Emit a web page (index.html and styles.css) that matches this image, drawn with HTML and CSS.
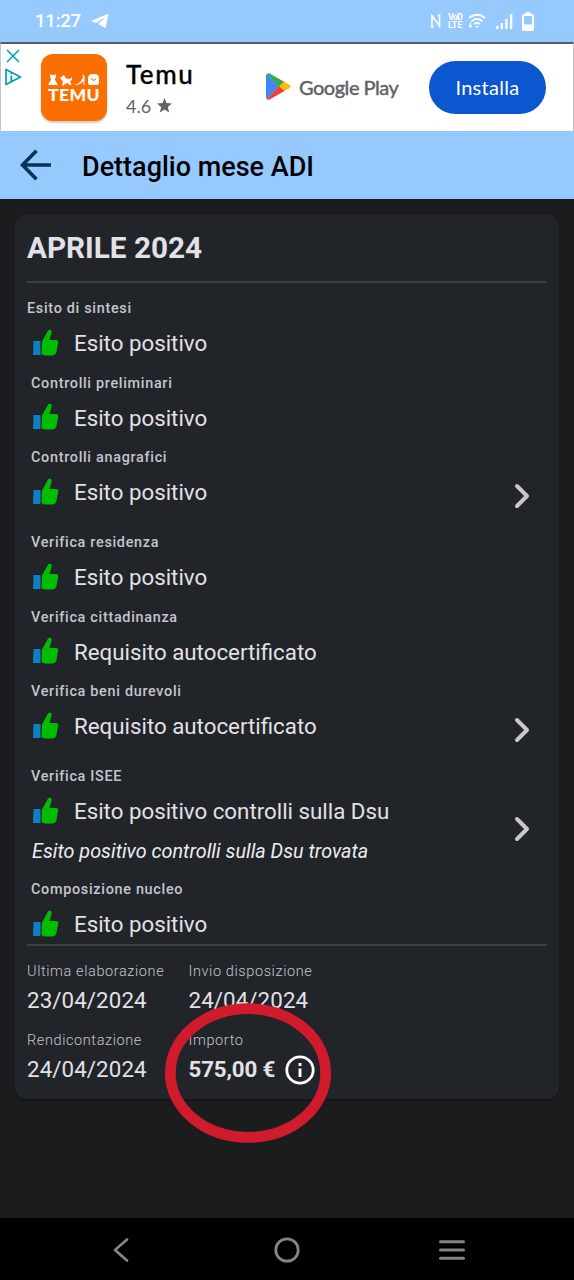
FILE: index.html
```html
<!DOCTYPE html>
<html lang="it">
<head>
<meta charset="utf-8">
<title>Dettaglio mese ADI</title>
<link rel="stylesheet" href="styles.css">
</head>
<body>
<svg class="defs" width="0" height="0" aria-hidden="true">
  <symbol id="thumb" viewBox="0 0 26 27">
    <path fill="#0f7fc4" d="M.5 12h7v14H0z"/>
    <path fill="#00bd00" d="M9 12.500 14.200 3C15 .9 16.200.3 17.400.8c1.300.6 1.600 2 1.100 3.500L16.400 11H23c1.700 0 2.500 1 2.200 2.600l-1.700 9.200c-.5 2.300-1.800 3.500-4 3.600h-7.300c-1.600-.1-2.600-.6-3.700-1.600z"/>
  </symbol>
  <symbol id="chevron" viewBox="0 0 18 28">
    <path d="M4 4 14 14 4 24" fill="none" stroke="#cbc6d0" stroke-width="4" stroke-linecap="round" stroke-linejoin="round"/>
  </symbol>
</svg>
<div class="screen">
  <header class="status">
    <span class="clock">11:27</span>
    <svg class="telegram" width="18" height="16" viewBox="0 0 18 16"><path fill="#fff" d="M17.600.5 0 7.900l5.200 2.100L15 3.400 7.300 11l7.200 4.300z"/></svg>
    <div class="indicators">
      <svg width="10" height="14" viewBox="0 0 10 14" fill="none" stroke="#fff" stroke-width="1.600"><path d="M3 12.500 1 13V1.500L8.500 12V1L6.500 1.500"/></svg>
      <span class="volte"><span class="vo">VoD</span><span>LTE</span></span>
      <svg width="18" height="16" viewBox="0 0 18 16" fill="none" stroke="#fff" stroke-width="1.900"><path d="M1 5Q9-1.500 17 5M3.500 8.300Q9 3.800 14.500 8.300M6.300 11.200Q9 9 11.700 11.200"/><path d="m7.200 13 1.800 2.200 1.800-2.200z" fill="#fff" stroke="none"/><path d="M2.500 9v5M1 12.500l1.500 1.700L4 12.500" stroke-width="1.200"/></svg>
      <svg class="signal" width="17" height="15" viewBox="0 0 17 15" fill="#fff"><path d="M0 12h2.500v3H0zM4.700 9h2.300v6H4.700zM9.300 5h2.300v10H9.300zM14 0h2.300v15H14z"/></svg>
      <svg class="battery" width="12" height="19" viewBox="0 0 12 19"><path fill="#fff" fill-rule="evenodd" d="M3.500 0h5v2H10q2 0 2 2v13q0 2-2 2H2q-2 0-2-2V4q0-2 2-2h1.500zM2 4v8.500h8V4z"/></svg>
    </div>
  </header>

  <section class="ad">
    <div class="ad-marks">
      <svg width="14" height="14" viewBox="0 0 14 14"><path d="m1 1 12 12M13 1 1 13" stroke="#00a0b4" stroke-width="1.500"/></svg>
      <svg width="17" height="18" viewBox="0 0 17 18"><path d="M1 1.500v15L15.500 9z" fill="none" stroke="#00a0b4" stroke-width="1.700" stroke-linejoin="round"/><path d="M6.300 7.500v6M6.300 4.500v1.800" stroke="#00a0b4" stroke-width="1.800"/></svg>
    </div>
    <div class="temu-logo">
      <svg width="52" height="12" viewBox="0 0 52 12" fill="#fff"><path d="M2.500 0 4 1h2L7.500 0l.5 3-1.200 2.500L10 11H0l3.200-5.500L2 3z"/><path d="m12 4 4-3 2 3.500 4 .5 2-2v3l-2 1 1.500 4h-2.500l-1-2-3.500 1-.5 1.500h-2L15 7l-1.500-1z"/><path d="M26 10.500c4 0 7-2.500 9-7L34.500.5l2 1.500v9h-1V6.500c-2 3-4.500 4.500-8.500 4.500z"/><path d="M41 1.500 43 0h5l2 1.500 1 2V9q0 2-2 2h-7q-2 0-2-2V3.500z"/><path d="M43 4.500q2.500 3.500 5 0" stroke="#fb6f00" stroke-width="1.200" fill="none"/></svg>
      <span>TEMU</span>
    </div>
    <div class="ad-app">
      <div class="ad-name">Temu</div>
      <div class="ad-rating"><span>4.6</span><svg width="15" height="15" viewBox="0 0 15 15"><path fill="#5f6368" d="m7.500 0 2 5.100 5.500.4-4.200 3.500 1.400 5.500-4.700-3-4.700 3L4.200 9 0 5.500l5.500-.4z"/></svg></div>
    </div>
    <div class="play">
      <svg width="25" height="27" viewBox="0 0 25 27"><path fill="#4285f4" d="M.7 1 13 13.500.7 26Q0 25.300 0 24V3Q0 1.700.7 1z"/><path fill="#34a853" d="M.7 1Q2-.4 4 .8L18.500 9 13 13.700z"/><path fill="#fbbc04" d="m18 8.700 5.300 3q2.500 1.700 0 3.500L18 18.300l-5.200-4.800z"/><path fill="#ea4335" d="m13 13.300 5.500 4.800L4 26.200q-2 1.200-3.300-.2z"/></svg>
      <span>Google Play</span>
    </div>
    <div class="install">Installa</div>
  </section>

  <nav class="appbar">
    <svg width="32" height="32" viewBox="0 0 32 32"><path d="M31 16H3M16.500 1.800 2.500 16l14 14.200" fill="none" stroke="#063653" stroke-width="3.700"/></svg>
    <h1>Dettaglio mese ADI</h1>
  </nav>

  <main class="content">
    <article class="card">
      <h2>APRILE 2024</h2>
      <ul class="checks">
        <li class="check first"><div class="label">Esito di sintesi</div><div class="value"><svg><use href="#thumb"/></svg><span>Esito positivo</span></div></li>
        <li class="check"><div class="label">Controlli preliminari</div><div class="value"><svg><use href="#thumb"/></svg><span>Esito positivo</span></div></li>
        <li class="check more"><div class="label">Controlli anagrafici</div><div class="value"><svg><use href="#thumb"/></svg><span>Esito positivo</span></div><svg class="go"><use href="#chevron"/></svg></li>
        <li class="check"><div class="label">Verifica residenza</div><div class="value"><svg><use href="#thumb"/></svg><span>Esito positivo</span></div></li>
        <li class="check"><div class="label">Verifica cittadinanza</div><div class="value"><svg><use href="#thumb"/></svg><span>Requisito autocertificato</span></div></li>
        <li class="check more"><div class="label">Verifica beni durevoli</div><div class="value"><svg><use href="#thumb"/></svg><span>Requisito autocertificato</span></div><svg class="go"><use href="#chevron"/></svg></li>
        <li class="check noted"><div class="label">Verifica ISEE</div><div class="value"><svg><use href="#thumb"/></svg><span>Esito positivo controlli sulla Dsu</span></div><div class="note">Esito positivo controlli sulla Dsu trovata</div><svg class="go"><use href="#chevron"/></svg></li>
        <li class="check last"><div class="label">Composizione nucleo</div><div class="value"><svg><use href="#thumb"/></svg><span>Esito positivo</span></div></li>
      </ul>
      <dl class="summary">
        <div><dt>Ultima elaborazione</dt><dd>23/04/2024</dd></div>
        <div><dt>Invio disposizione</dt><dd>24/04/2024</dd></div>
        <div><dt>Rendicontazione</dt><dd>24/04/2024</dd></div>
        <div class="amount"><dt>Importo</dt><dd><b>575,00 €</b><svg width="30" height="30" viewBox="0 0 30 30"><circle cx="15" cy="15" r="13.200" fill="none" stroke="#fff" stroke-width="2.800"/><path d="M15 13.500v8.500M15 8v3" stroke="#fff" stroke-width="2.900"/></svg></dd>
          <svg class="marker" width="168" height="140" viewBox="0 0 168 140"><ellipse cx="84" cy="70" rx="77.700" ry="64.300" fill="none" stroke="#cf1b2b" stroke-width="10.800"/></svg>
        </div>
      </dl>
    </article>
  </main>

  <footer class="navbar">
    <svg width="18" height="26" viewBox="0 0 18 26"><path d="M15 2.500 3 13l12 10.500" fill="none" stroke="#858585" stroke-width="2.700" stroke-linecap="round" stroke-linejoin="round"/></svg>
    <svg class="home" width="26" height="26" viewBox="0 0 26 26"><circle cx="13" cy="13" r="11.200" fill="none" stroke="#858585" stroke-width="2.800"/></svg>
    <svg width="26" height="20" viewBox="0 0 26 20"><path d="M1.500 1.700h23M1.500 10h23M1.500 18.300h23" stroke="#858585" stroke-width="3" stroke-linecap="round"/></svg>
  </footer>
</div>
</body>
</html>
```
FILE: styles.css
```css
* { box-sizing: border-box; }
body { margin: 0; font-family: Roboto, sans-serif; background: #1b1c1e; }
h1, h2, ul, dl, dd { margin: 0; padding: 0; }
svg { display: block; flex: none; }
.defs { position: absolute; }
.screen { width: 574px; height: 1280px; display: flex; flex-direction: column; white-space: nowrap; overflow: hidden; }

.status { height: 42px; background: #96caff; display: flex; align-items: center; padding: 0 40px 0 35px; color: #fff; }
.clock { font-size: 18.500px; font-weight: 500; letter-spacing: -.2px; }
.telegram { margin-left: 10px; }
.indicators { margin-left: auto; display: flex; align-items: center; }
.volte { display: flex; flex-direction: column; font-size: 9px; line-height: 8px; font-weight: 700; margin: 0 5px 0 7px; width: 15px; }
.vo { letter-spacing: -.9px; }
.signal { margin-left: 10px; }
.battery { margin-left: 9px; }

.ad { height: 89px; background: #fff; border-top: 2px solid #555f69; border-left: 1px solid #bfc7cf; border-right: 1px solid #c5c9ce; display: flex; align-items: center; padding-right: 27px; }
.ad-marks { width: 40px; padding-left: 5px; align-self: flex-start; padding-top: 5px; display: flex; flex-direction: column; gap: 5px; }
.ad-marks svg + svg { margin-left: -1px; }
.temu-logo { width: 66px; height: 67px; border-radius: 12px; background: #fb6f00; box-shadow: 0 2px 2px #0003; display: flex; flex-direction: column; align-items: center; padding-top: 20px; }
.temu-logo span { font: 900 17.500px/18px Lato, sans-serif; color: #fff; letter-spacing: .4px; }
.ad-app { margin-left: 19px; width: 140px; }
.ad-name { font: 500 26px/30px Lato, sans-serif; color: #000; letter-spacing: 1.600px; -webkit-text-stroke: .3px #000; }
.ad-rating { margin-top: 6px; display: flex; align-items: center; gap: 6px; font: 18px/22px Lato, sans-serif; color: #5f6368; }
.play { display: flex; align-items: center; gap: 8px; margin-top: -2px; font: 500 20px/26px Lato, sans-serif; letter-spacing: -.5px; color: #5f6368; -webkit-text-stroke: .3px #5f6368; }
.install { margin-left: auto; width: 117px; height: 53px; border-radius: 27px; background: #0b57d0; color: #fff; font: 20px/52px Lato, sans-serif; letter-spacing: .3px; text-align: center; }

.appbar { height: 68px; background: #96caff; display: flex; align-items: center; padding-left: 20px; gap: 30px; }
.appbar h1 { font-size: 27px; font-weight: 500; line-height: 34px; color: #000; padding-top: 4px; }

.content { flex: 1; padding: 15px 15px 0; }
.card { height: 885px; border-radius: 12px; background: #212429; padding: 0 12px; color: #e3e1e6; box-shadow: 0 1px 2px #0006; }
.card h2 { height: 69px; border-bottom: 2px solid #3b3e43; font-size: 29.700px; font-weight: 700; line-height: 68px; }
.checks { list-style: none; padding-top: 14px; border-bottom: 2px solid #3b3e43; height: 663px; }
.check { position: relative; height: 74.500px; padding-left: 4px; }
.check.first .label { margin-left: -4px; }
.check.more { height: 85px; }
.check.noted { height: 113px; }
.label { font-size: 14.400px; font-weight: 500; line-height: 23px; height: 22px; letter-spacing: .7px; color: #c6c5cf; }
.value { display: flex; align-items: center; height: 48px; gap: 15px; padding-left: 2px; font-size: 22.300px; }
.value svg { width: 26px; height: 27px; margin-top: -2px; }
.note { font-size: 19.800px; font-style: italic; line-height: 24px; margin-top: 5px; padding-left: 1px; color: #eeedf2; }
.go { position: absolute; right: 16px; top: 36px; width: 18px; height: 28px; }
.noted .go { top: 50px; }

.summary { display: grid; grid-template-columns: 161.500px 1fr; grid-auto-rows: 68.500px; padding-top: 14px; }
.summary dt { font-size: 14.500px; font-weight: 300; line-height: 24px; letter-spacing: .6px; color: #c6c5cf; }
.summary dd { display: flex; align-items: center; height: 32px; font-size: 22.300px; letter-spacing: .1px; }
.amount { position: relative; }
.amount b { letter-spacing: -.15px; }
.amount dd svg { margin: 2px 0 0 10px; }
.marker { position: absolute; left: -25px; top: -26px; }

.navbar { height: 62px; background: #000; display: flex; align-items: center; justify-content: space-between; padding: 1px 109px 0 112px; }
.home { margin-left: 4px; }
```
